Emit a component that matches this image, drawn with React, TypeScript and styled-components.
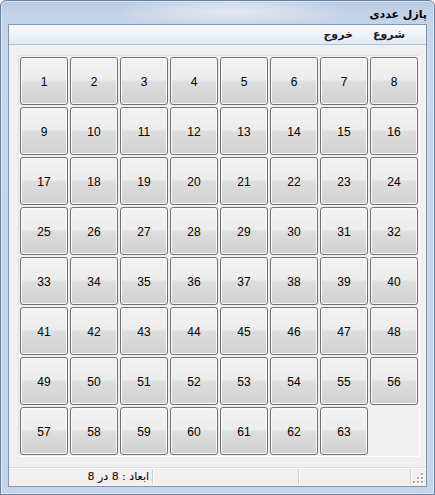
import React from "react";
import styled, { createGlobalStyle } from "styled-components";

const Global = createGlobalStyle`
  html, body { margin: 0; padding: 0; background: #ffffff; }
  body { font-family: "DejaVu Sans", "Liberation Sans", sans-serif; }
`;

const Window = styled.div`
  width: 435px;
  height: 495px;
  box-sizing: border-box;
  display: flex;
  flex-direction: column;
  padding: 0 7px 7px 7px;
  border: 1px solid #6e819a;
  border-radius: 6px 6px 0 0;
  background:
    radial-gradient(ellipse 120px 16px at 230px 10px, rgba(255,255,255,0.55), rgba(255,255,255,0) 100%),
    linear-gradient(to bottom, #b8cbe2 0px, #c3d3e7 14px, #c9d7ea 40px, #c6d5e8 100%);
  box-shadow: inset 0 0 0 1px rgba(255,255,255,0.45);
`;

const TitleBar = styled.div`
  height: 23px;
  display: flex;
  align-items: center;
  justify-content: flex-end;
`;

const Title = styled.span`
  direction: rtl;
  font-family: "DejaVu Sans", sans-serif;
  font-weight: bold;
  font-size: 11px;
  color: #000;
  margin-top: 3px;
`;

const Client = styled.div`
  flex: 1;
  display: flex;
  flex-direction: column;
  border: 1px solid #8497b0;
  background: #f0f0f0;
  min-height: 0;
`;

const MenuBar = styled.div`
  height: 19px;
  display: flex;
  direction: rtl;
  align-items: center;
  gap: 16px;
  padding-right: 19px;
  border-bottom: 1px solid #b6c2d2;
  background: linear-gradient(to bottom, #f8fafd 0%, #eef3fa 50%, #e1e9f4 100%);
`;

const MenuItem = styled.span`
  font-family: "DejaVu Sans", sans-serif;
  font-size: 11px;
  font-weight: bold;
  color: #1a1a1a;
  padding: 0 2px;
`;

const Body = styled.div`
  flex: 1;
  display: flex;
  align-items: flex-start;
  padding: 10px 0 10px 9px;
`;

const Panel = styled.div`
  padding: 1px;
  border: 1px solid;
  border-color: #e3e3e3 #ffffff #ffffff #e3e3e3;
`;

const Grid = styled.div`
  display: grid;
  grid-template-columns: repeat(8, 48px);
  grid-auto-rows: 48px;
  gap: 2px;
`;

const Tile = styled.button`
  box-sizing: border-box;
  width: 48px;
  height: 48px;
  margin: 0;
  padding: 3px 0 0 0;
  border: 1px solid #707070;
  border-radius: 3px;
  background: linear-gradient(to bottom, #f3f3f3 0%, #ececec 48%, #dedede 50%, #d1d1d1 100%);
  box-shadow: inset 0 0 0 1px #fbfbfb;
  font-family: "Liberation Sans", Arial, sans-serif;
  font-size: 12px;
  color: #000;
  display: flex;
  align-items: center;
  justify-content: center;
`;

const StatusBar = styled.div`
  height: 19px;
  display: flex;
  align-items: stretch;
  border-top: 1px solid #d9d9d9;
  box-shadow: inset 0 1px 0 #ffffff;
  background: #f1eff0;
`;

const StatusPanel = styled.div<{ $w?: number }>`
  ${(p) => (p.$w ? `width: ${p.$w}px;` : "flex: 1;")}
  box-sizing: border-box;
  display: flex;
  align-items: center;
  justify-content: flex-end;
  padding-right: 3px;
  margin: 2px 0;
  border-right: 1px solid #cfcfcf;
  box-shadow: 1px 0 0 #ffffff;
`;

const StatusText = styled.span`
  direction: rtl;
  font-family: "DejaVu Sans", sans-serif;
  font-size: 11px;
  color: #000;
`;

const Grip = styled.div`
  flex: 1;
  display: flex;
  align-items: flex-end;
  justify-content: flex-end;
  padding: 0 2px 2px 0;
`;

function GripIcon() {
  const dots: [number, number][] = [
    [8, 0],
    [4, 4],
    [8, 4],
    [0, 8],
    [4, 8],
    [8, 8],
  ];
  return (
    <svg width="11" height="11" viewBox="0 0 11 11">
      {dots.map(([x, y], i) => (
        <g key={i}>
          <rect x={x + 1} y={y + 1} width="2" height="2" fill="#ffffff" />
          <rect x={x} y={y} width="2" height="2" fill="#a8a8a8" />
        </g>
      ))}
    </svg>
  );
}

export default function App() {
  const nums = Array.from({ length: 63 }, (_, i) => i + 1);
  return (
    <>
      <Global />
      <Window>
        <TitleBar>
          <Title>پازل عددی</Title>
        </TitleBar>
        <Client>
          <MenuBar>
            <MenuItem>شروع</MenuItem>
            <MenuItem>خروج</MenuItem>
          </MenuBar>
          <Body>
            <Panel>
              <Grid>
                {nums.map((n) => (
                  <Tile key={n}>{n}</Tile>
                ))}
              </Grid>
            </Panel>
          </Body>
          <StatusBar>
            <StatusPanel $w={144}>
              <StatusText>ابعاد : 8 در 8</StatusText>
            </StatusPanel>
            <StatusPanel $w={146} />
            <StatusPanel $w={112} />
            <Grip>
              <GripIcon />
            </Grip>
          </StatusBar>
        </Client>
      </Window>
    </>
  );
}
